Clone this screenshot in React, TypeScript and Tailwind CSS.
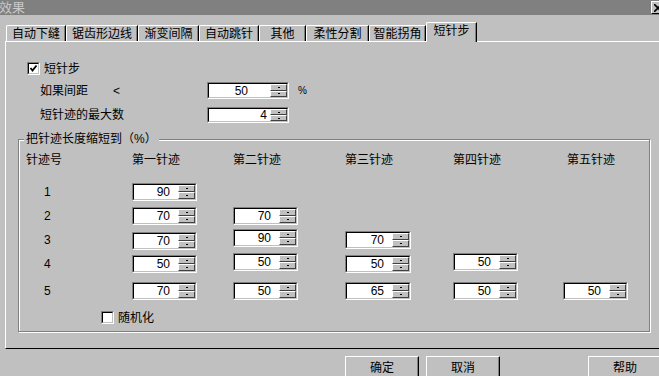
import React from "react";

const FONT = "font-['Liberation_Sans','Noto_Sans_CJK_SC',sans-serif]";
const COLS = "grid grid-cols-[106px_101px_112px_108px_110px_110px]";

function Half() {
  return (
    <div className="flex-1 flex items-center justify-center border border-t-white border-l-white border-r-[#404040] border-b-[#404040] bg-[#c0c0c0]">
      <div className="w-[2px] h-[1px] bg-black" />
    </div>
  );
}

function Spin({
  v,
  w = "w-[65px]",
  h = "h-[18px]",
  pr = "pr-[8px]",
  cls = "",
}: {
  v: string;
  w?: string;
  h?: string;
  pr?: string;
  cls?: string;
}) {
  return (
    <div
      className={`flex ${w} ${h} ${cls} border border-t-[#808080] border-l-[#808080] border-b-white border-r-white`}
    >
      <div className="flex flex-1 border border-t-black border-l-black border-b-[#c0c0c0] border-r-[#c0c0c0] bg-white">
        <div
          className={`flex-1 flex items-center justify-end ${pr} text-[12px] leading-none`}
        >
          {v}
        </div>
        <div className="w-[17px] flex flex-col bg-[#c0c0c0]">
          <Half />
          <Half />
        </div>
      </div>
    </div>
  );
}

function Check({ checked }: { checked?: boolean }) {
  return (
    <div className="w-[13px] h-[13px] border border-t-[#808080] border-l-[#808080] border-b-white border-r-white shrink-0">
      <div className="w-full h-full border border-t-black border-l-black border-b-[#c0c0c0] border-r-[#c0c0c0] bg-white flex items-center justify-center">
        {checked && (
          <svg width="9" height="9" viewBox="0 0 9 9">
            <path
              d="M1.5 4 L3.5 6.5 L7.5 1.5"
              fill="none"
              stroke="black"
              strokeWidth="1.8"
            />
          </svg>
        )}
      </div>
    </div>
  );
}

function Tab({ label, w }: { label: string; w: string }) {
  return (
    <div
      className={`${w} h-[16px] shrink-0 flex items-center justify-center border-l border-t border-white border-r border-r-black shadow-[inset_-1px_0_0_#808080] rounded-tl-[2px] text-[12px] leading-none`}
    >
      {label}
    </div>
  );
}

function Btn({ label, cls = "" }: { label: string; cls?: string }) {
  return (
    <div
      className={`w-[74px] h-[23px] shrink-0 flex items-center justify-center border border-t-white border-l-white border-r-black border-b-black shadow-[inset_-1px_-1px_0_#808080] text-[12px] leading-none ${cls}`}
    >
      {label}
    </div>
  );
}

function RowLabel({ n, cls = "" }: { n: string; cls?: string }) {
  return (
    <div className={`h-[18px] flex items-center pl-[18px] text-[12px] leading-none ${cls}`}>
      {n}
    </div>
  );
}

export default function App() {
  return (
    <div
      className={`w-[659px] h-[376px] bg-[#c0c0c0] overflow-hidden flex flex-col text-black ${FONT}`}
    >
      {/* Title bar */}
      <div className="h-[15px] shrink-0 bg-[#808080] flex items-start">
        <div className="text-[13px] leading-[15px] text-[#c8c8c8] ml-[-1px]">效果</div>
        <div className="ml-auto mr-[-9px] mt-[1px] w-[17px] h-[13px] bg-[#c0c0c0] border border-t-white border-l-white border-r-black border-b-black flex items-center justify-start pl-[2px]">
          <svg width="8" height="8" viewBox="0 0 8 8">
            <path d="M0 0 L8 8 M8 0 L0 8" stroke="black" strokeWidth="1.6" />
          </svg>
        </div>
      </div>

      {/* Tabs */}
      <div className="mt-[7px] h-[19px] shrink-0 pl-[6px] flex items-end">
        <Tab label="自动下缝" w="w-[60px]" />
        <Tab label="锯齿形边线" w="w-[72px]" />
        <Tab label="渐变间隔" w="w-[61px]" />
        <Tab label="自动跳针" w="w-[60px]" />
        <Tab label="其他" w="w-[47px]" />
        <Tab label="柔性分割" w="w-[63px]" />
        <Tab label="智能拐角" w="w-[57px]" />
        <div className="w-[51px] h-[20px] mb-[-1px] relative z-10 shrink-0 bg-[#c0c0c0] flex items-start justify-center pt-[2px] border-l border-t border-white border-r border-r-black shadow-[inset_-1px_0_0_#808080] rounded-tl-[2px] text-[12px] leading-none">
          短针步
        </div>
      </div>

      {/* Panel */}
      <div className="ml-[5px] w-[700px] h-[308px] shrink-0 border-t border-l border-white border-b border-b-black flex flex-col">
        <div className="mt-[20px] ml-[21px] h-[13px] flex items-center gap-[4px]">
          <Check checked />
          <span className="text-[12px] leading-none">短针步</span>
        </div>

        <div className="mt-[7px] ml-[34px] h-[17px] flex items-center">
          <span className="w-[73px] text-[12px] leading-none">如果间距</span>
          <span className="w-[94px] text-[12px] leading-none">&lt;</span>
          <Spin v="50" w="w-[82px]" h="h-[17px]" pr="pr-[22px]" />
          <span className="ml-[9px] text-[10px] leading-none">%</span>
        </div>

        <div className="mt-[8px] ml-[34px] h-[16px] flex items-center">
          <span className="w-[167px] text-[12px] leading-none">短针迹的最大数</span>
          <Spin v="4" w="w-[82px]" h="h-[16px]" pr="pr-[3px]" />
        </div>

        {/* Group box */}
        <div className="mt-[16px] ml-[12px] w-[632px] h-[193px] relative border border-[#808080] shadow-[1px_1px_0_white,inset_1px_1px_0_white] flex flex-col">
          <div className="absolute left-[5px] top-[-7px] px-[2px] bg-[#c0c0c0] text-[12px] leading-[12px]">
            把针迹长度缩短到（%）
          </div>

          <div className={`mt-[14px] pl-[7px] h-[12px] ${COLS} text-[12px] leading-[12px]`}>
            <span>针迹号</span>
            <span>第一针迹</span>
            <span>第二针迹</span>
            <span>第三针迹</span>
            <span>第四针迹</span>
            <span className="pl-[4px]">第五针迹</span>
          </div>

          <div className="mt-[17px] pl-[7px] flex flex-col">
            <div className={`h-[24px] ${COLS} items-start`}>
              <RowLabel n="1" />
              <Spin v="90" />
            </div>
            <div className={`h-[24px] ${COLS} items-start`}>
              <RowLabel n="2" />
              <Spin v="70" />
              <Spin v="70" />
            </div>
            <div className={`h-[23px] ${COLS} items-start`}>
              <RowLabel n="3" />
              <Spin v="70" cls="mt-[1px]" />
              <Spin v="90" cls="mt-[-2px]" />
              <Spin v="70" w="w-[66px]" />
            </div>
            <div className={`h-[28px] ${COLS} items-start`}>
              <RowLabel n="4" cls="mt-[1px]" />
              <Spin v="50" cls="mt-[1px]" />
              <Spin v="50" cls="mt-[-1px]" />
              <Spin v="50" w="w-[66px]" cls="mt-[1px]" />
              <Spin v="50" cls="mt-[-1px]" />
            </div>
            <div className={`h-[18px] ${COLS} items-start`}>
              <RowLabel n="5" />
              <Spin v="70" />
              <Spin v="50" />
              <Spin v="65" w="w-[66px]" />
              <Spin v="50" />
              <Spin v="50" />
            </div>
          </div>

          <div className="mt-[11px] ml-[82px] h-[13px] flex items-center gap-[4px]">
            <Check />
            <span className="text-[12px] leading-none">随机化</span>
          </div>
        </div>
      </div>

      {/* Buttons */}
      <div className="mt-[7px] ml-[345px] flex">
        <Btn label="确定" />
        <Btn label="取消" cls="ml-[7px]" />
        <Btn label="帮助" cls="ml-[88px]" />
      </div>
    </div>
  );
}
